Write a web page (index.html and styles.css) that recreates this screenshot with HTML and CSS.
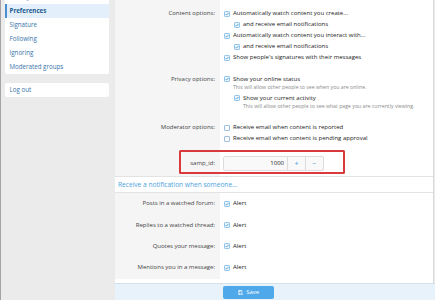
FILE: index.html
```html
<!DOCTYPE html>
<html>
<head>
<meta charset="utf-8">
<link rel="stylesheet" href="styles.css">
</head>
<body>
<div class="page">
  <aside class="side">
    <nav class="block">
      <a class="nav-item">Privacy</a>
      <a class="nav-item is-selected">Preferences</a>
      <a class="nav-item">Signature</a>
      <a class="nav-item">Following</a>
      <a class="nav-item">Ignoring</a>
      <a class="nav-item">Moderated groups</a>
    </nav>
    <nav class="block">
      <a class="nav-item">Log out</a>
    </nav>
  </aside>

  <main class="panel">
    <div class="form-body">
      <div class="row row-first">
        <div class="label">Content options:</div>
        <div class="ctrl">
          <ul class="checks">
            <li class="check"><svg class="box" viewBox="0 0 6 6"><rect x="0.5" y="0.5" width="5" height="5" rx="0.6" fill="#eef6fd" stroke="#86c0ea" stroke-width="0.9"/><path d="M1.6 3.1 2.6 4.1 4.5 1.9" fill="none" stroke="#3d93d6" stroke-width="0.8"/></svg>Automatically watch content you create...</li>
            <li class="check sub"><svg class="box" viewBox="0 0 6 6"><rect x="0.5" y="0.5" width="5" height="5" rx="0.6" fill="#eef6fd" stroke="#86c0ea" stroke-width="0.9"/><path d="M1.6 3.1 2.6 4.1 4.5 1.9" fill="none" stroke="#3d93d6" stroke-width="0.8"/></svg>and receive email notifications</li>
            <li class="check"><svg class="box" viewBox="0 0 6 6"><rect x="0.5" y="0.5" width="5" height="5" rx="0.6" fill="#eef6fd" stroke="#86c0ea" stroke-width="0.9"/><path d="M1.6 3.1 2.6 4.1 4.5 1.9" fill="none" stroke="#3d93d6" stroke-width="0.8"/></svg>Automatically watch content you interact with...</li>
            <li class="check sub"><svg class="box" viewBox="0 0 6 6"><rect x="0.5" y="0.5" width="5" height="5" rx="0.6" fill="#eef6fd" stroke="#86c0ea" stroke-width="0.9"/><path d="M1.6 3.1 2.6 4.1 4.5 1.9" fill="none" stroke="#3d93d6" stroke-width="0.8"/></svg>and receive email notifications</li>
            <li class="check"><svg class="box" viewBox="0 0 6 6"><rect x="0.5" y="0.5" width="5" height="5" rx="0.6" fill="#eef6fd" stroke="#86c0ea" stroke-width="0.9"/><path d="M1.6 3.1 2.6 4.1 4.5 1.9" fill="none" stroke="#3d93d6" stroke-width="0.8"/></svg>Show people's signatures with their messages</li>
          </ul>
        </div>
      </div>

      <div class="row">
        <div class="label">Privacy options:</div>
        <div class="ctrl">
          <ul class="checks">
            <li class="check-wrap">
              <div class="check"><svg class="box" viewBox="0 0 6 6"><rect x="0.5" y="0.5" width="5" height="5" rx="0.6" fill="#eef6fd" stroke="#86c0ea" stroke-width="0.9"/><path d="M1.6 3.1 2.6 4.1 4.5 1.9" fill="none" stroke="#3d93d6" stroke-width="0.8"/></svg>Show your online status</div>
              <div class="hint">This will allow other people to see when you are online.</div>
            </li>
            <li class="check-wrap sub">
              <div class="check"><svg class="box" viewBox="0 0 6 6"><rect x="0.5" y="0.5" width="5" height="5" rx="0.6" fill="#eef6fd" stroke="#86c0ea" stroke-width="0.9"/><path d="M1.6 3.1 2.6 4.1 4.5 1.9" fill="none" stroke="#3d93d6" stroke-width="0.8"/></svg>Show your current activity</div>
              <div class="hint">This will allow other people to see what page you are currently viewing.</div>
            </li>
          </ul>
        </div>
      </div>

      <div class="row">
        <div class="label">Moderator options:</div>
        <div class="ctrl">
          <ul class="checks">
            <li class="check"><svg class="box" viewBox="0 0 6 6"><rect x="0.5" y="0.5" width="5" height="5" rx="0.6" fill="#fafcfe" stroke="#8fb4d4" stroke-width="0.9"/></svg>Receive email when content is reported</li>
            <li class="check"><svg class="box" viewBox="0 0 6 6"><rect x="0.5" y="0.5" width="5" height="5" rx="0.6" fill="#fafcfe" stroke="#8fb4d4" stroke-width="0.9"/></svg>Receive email when content is pending approval</li>
          </ul>
        </div>
      </div>

      <div class="row row-input">
        <div class="label label-input">samp_id:</div>
        <div class="ctrl">
          <div class="num">
            <span class="num-value">1000</span>
            <span class="num-btn">+</span>
            <span class="num-btn">&minus;</span>
          </div>
        </div>
        <span class="highlight"></span>
      </div>

      <h3 class="section-head">Receive a notification when someone...</h3>

      <div class="notify">
        <div class="row row-notify">
          <div class="label">Posts in a watched forum:</div>
          <div class="ctrl"><div class="check"><svg class="box" viewBox="0 0 6 6"><rect x="0.5" y="0.5" width="5" height="5" rx="0.6" fill="#eef6fd" stroke="#86c0ea" stroke-width="0.9"/><path d="M1.6 3.1 2.6 4.1 4.5 1.9" fill="none" stroke="#3d93d6" stroke-width="0.8"/></svg>Alert</div></div>
        </div>
        <div class="row row-notify">
          <div class="label">Replies to a watched thread:</div>
          <div class="ctrl"><div class="check"><svg class="box" viewBox="0 0 6 6"><rect x="0.5" y="0.5" width="5" height="5" rx="0.6" fill="#eef6fd" stroke="#86c0ea" stroke-width="0.9"/><path d="M1.6 3.1 2.6 4.1 4.5 1.9" fill="none" stroke="#3d93d6" stroke-width="0.8"/></svg>Alert</div></div>
        </div>
        <div class="row row-notify">
          <div class="label">Quotes your message:</div>
          <div class="ctrl"><div class="check"><svg class="box" viewBox="0 0 6 6"><rect x="0.5" y="0.5" width="5" height="5" rx="0.6" fill="#eef6fd" stroke="#86c0ea" stroke-width="0.9"/><path d="M1.6 3.1 2.6 4.1 4.5 1.9" fill="none" stroke="#3d93d6" stroke-width="0.8"/></svg>Alert</div></div>
        </div>
        <div class="row row-notify">
          <div class="label">Mentions you in a message:</div>
          <div class="ctrl"><div class="check"><svg class="box" viewBox="0 0 6 6"><rect x="0.5" y="0.5" width="5" height="5" rx="0.6" fill="#eef6fd" stroke="#86c0ea" stroke-width="0.9"/><path d="M1.6 3.1 2.6 4.1 4.5 1.9" fill="none" stroke="#3d93d6" stroke-width="0.8"/></svg>Alert</div></div>
        </div>
      </div>
    </div>

    <div class="footer">
      <span></span>
      <div class="footer-ctrl">
        <button class="save"><svg class="save-ico" viewBox="0 0 10 10"><path d="M1 1H7.3L9 2.7V9H1Z" fill="none" stroke="#fff" stroke-width="1"/><rect x="3" y="1" width="3.6" height="2.4" fill="none" stroke="#fff" stroke-width="0.8"/><rect x="2.8" y="5.6" width="4.4" height="3.4" fill="none" stroke="#fff" stroke-width="0.8"/></svg>Save</button>
      </div>
    </div>
  </main>
</div>
</body>
</html>
```

FILE: styles.css
```css
* { box-sizing: border-box; }

html, body {
  margin: 0;
  padding: 0;
  background: #ebebeb;
  overflow: hidden;
}

body {
  font-family: "Open Sans", "Noto Sans", sans-serif;
  font-size: 6px;
  color: #1a1a1a;
}

.page {
  display: flex;
  align-items: flex-start;
  border-left: 1px solid #a4a4a4;
  min-height: 300px;
}

/* sidebar */
.side {
  width: 104px;
  margin-left: 4px;
  margin-top: -10px;
  display: flex;
  flex-direction: column;
  gap: 9px;
  flex-shrink: 0;
}

.block {
  background: #fff;
  border-radius: 2px;
  display: flex;
  flex-direction: column;
}

.nav-item {
  display: block;
  line-height: 14px;
  padding-left: 4.5px;
  font-size: 6.2px;
  color: #3672a8;
  white-space: nowrap;
}

.nav-item.is-selected {
  background: #e3f0fb;
  border-left: 2px solid #4a8fd0;
  padding-left: 2.5px;
  font-weight: 700;
  color: #225b90;
}

/* main panel */
.panel {
  margin-left: 6px;
  width: 320px;
  flex-shrink: 0;
  display: flex;
  flex-direction: column;
}

.form-body {
  background: #fff;
  border-right: 1px solid #d9d9d9;
  margin-right: 1px;
}

.row {
  display: grid;
  grid-template-columns: 105px 1fr;
  position: relative;
}

.label {
  background: #f5f5f5;
  text-align: right;
  padding: 6px 5px 6.5px 0;
  line-height: 9px;
  color: #444;
  white-space: nowrap;
}

.ctrl {
  padding: 6px 0 6.5px 4px;
}

.row-first .label,
.row-first .ctrl {
  padding-top: 9px;
}

.checks {
  list-style: none;
  margin: 0;
  padding: 0;
  display: flex;
  flex-direction: column;
  gap: 2px;
}

.check {
  display: flex;
  align-items: center;
  line-height: 9px;
  white-space: nowrap;
  color: #1a1a1a;
}

.sub {
  margin-left: 10px;
}

.box {
  width: 6px;
  height: 6px;
  margin-right: 3px;
  flex-shrink: 0;
}

.hint {
  font-size: 5.2px;
  line-height: 9px;
  margin-top: -1px;
  padding-left: 9px;
  color: #8a8a8a;
  white-space: nowrap;
}

/* number input row */
.row-input .label,
.row-input .ctrl {
  padding-top: 6px;
  padding-bottom: 5.5px;
}

.label-input {
  line-height: 15px;
}

.num {
  display: flex;
  width: 101px;
  height: 15px;
  margin-left: -1px;
  border: 1px solid #dcdcdc;
  border-radius: 2px;
  background: #f9f9f9;
}

.num-value {
  flex: 1;
  text-align: right;
  padding-right: 3px;
  line-height: 13px;
  color: #222;
}

.num-btn {
  width: 18px;
  border-left: 1px solid #dcdcdc;
  text-align: center;
  line-height: 13px;
  color: #3f9ae0;
  font-size: 7px;
}

.highlight {
  position: absolute;
  left: 64px;
  top: 0.5px;
  width: 166px;
  height: 24px;
  border: 2px solid #d8393a;
  border-radius: 1.5px;
  pointer-events: none;
}

/* notifications */
.section-head {
  margin: 0;
  font-weight: 400;
  font-size: 6.6px;
  line-height: 15px;
  padding-left: 3px;
  color: #4aa2de;
  background: #fff;
  border-top: 1px solid #e3e3e3;
  border-bottom: 1px solid #e3e3e3;
}

.notify {
  padding-bottom: 4.4px;
}

.row-notify .label,
.row-notify .ctrl {
  padding-top: 6.2px;
  padding-bottom: 6.2px;
}

/* footer */
.footer {
  display: grid;
  grid-template-columns: 105px 1fr;
  background: #e8f2fb;
  border-top: 1px solid #d4e0ea;
  padding: 2px 0 4px;
}

.footer-ctrl {
  padding-left: 3px;
}

.save {
  display: flex;
  align-items: center;
  justify-content: center;
  gap: 3px;
  width: 51px;
  height: 13px;
  border: 0;
  border-radius: 2px;
  background: #4ea8ea;
  color: #fff;
  font-family: "Open Sans", "Noto Sans", sans-serif;
  font-size: 6px;
  padding: 0;
}

.save-ico {
  width: 5.5px;
  height: 5.5px;
}
```
